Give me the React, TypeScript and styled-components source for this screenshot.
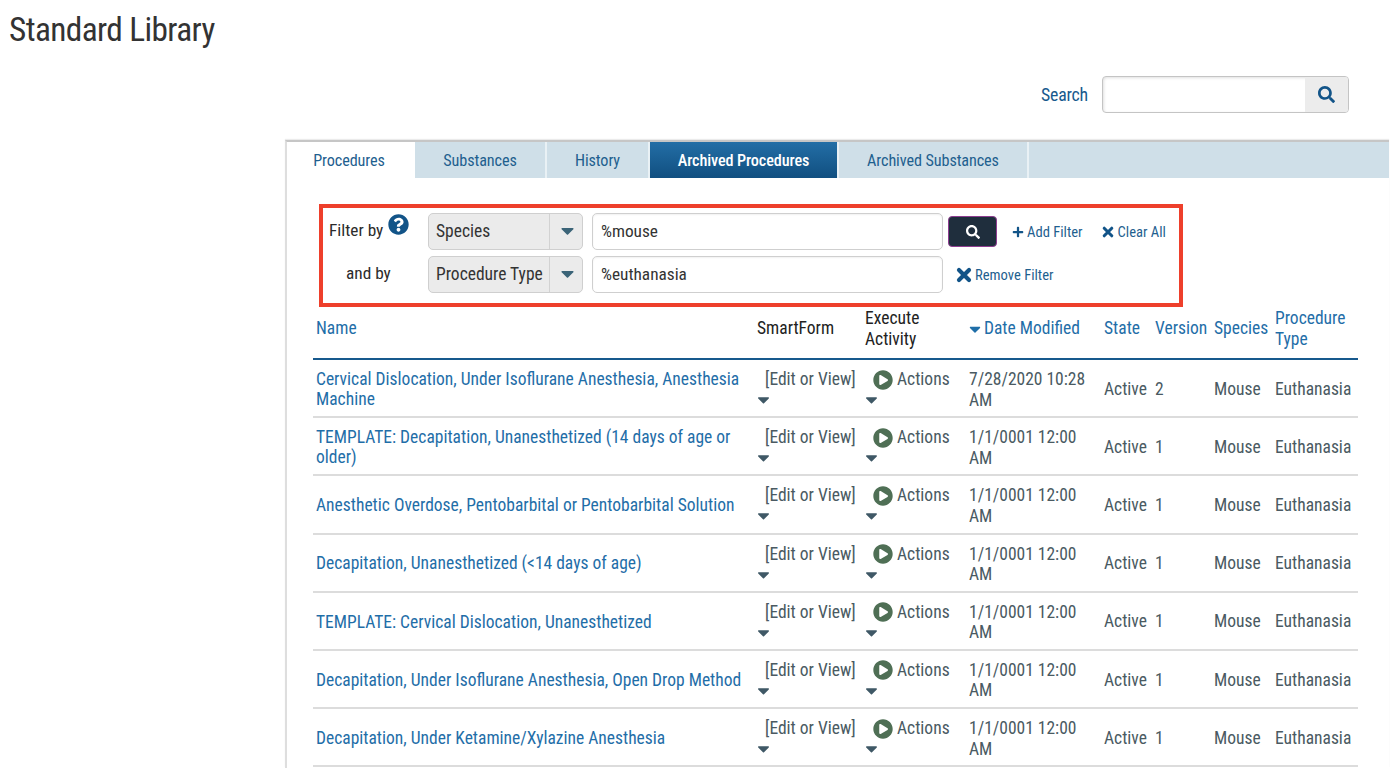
import React from 'react';
import styled, { createGlobalStyle } from 'styled-components';
import { FaSearch, FaPlus, FaQuestionCircle, FaPlayCircle, FaCaretDown } from 'react-icons/fa';

const GlobalStyle = createGlobalStyle`
  html, body {
    margin: 0;
    padding: 0;
    height: 768px;
    overflow: hidden;
    background: #fff;
  }
  body {
    font-family: Roboto, "Liberation Sans", sans-serif;
    font-stretch: 75%;
    color: #3d4a52;
  }
  * { box-sizing: border-box; }
`;

const Page = styled.div`
  width: 1392px;
  height: 768px;
  overflow: hidden;
`;

const Title = styled.h1`
  margin: 0;
  height: 76px;
  padding: 11px 0 0 9px;
  font-size: 33.3px;
  line-height: 38px;
  font-weight: 400;
  color: #333;
  letter-spacing: -0.6px;
`;

const SearchRow = styled.div`
  display: flex;
  align-items: center;
  justify-content: flex-end;
  gap: 14px;
  height: 64px;
  padding: 0 43px 27px 0;
`;

const SearchLabel = styled.span`
  font-size: 17.8px;
  color: #17598d;
  letter-spacing: -0.2px;
`;

const SearchBox = styled.div`
  display: flex;
  width: 247px;
  height: 37px;
  border: 1px solid #c4c4c4;
  border-radius: 4px;
  overflow: hidden;
  box-shadow: inset 1px 1px 3px rgba(0, 0, 0, 0.12);
`;

const SearchField = styled.div`
  flex: 1;
`;

const SearchButton = styled.div`
  width: 43px;
  display: flex;
  align-items: center;
  justify-content: center;
  background: #ececec;
  color: #125488;
  font-size: 17px;
`;

const Panel = styled.section`
  margin-left: 285px;
  width: 1104px;
  height: 628px;
  border-top: 2px solid #c6c6c6;
  border-left: 2px solid #dedede;
  box-shadow: 0 -1px 1px rgba(0, 0, 0, 0.08);
`;

const TabBar = styled.div`
  display: flex;
  height: 36px;
  background: #cfdfe8;
`;

const Tab = styled.div<{ $state?: 'current' | 'dark'; $w: number }>`
  width: ${p => p.$w}px;
  display: flex;
  align-items: center;
  justify-content: center;
  font-size: 16.2px;
  letter-spacing: -0.1px;
  font-weight: ${p => (p.$state === 'dark' ? 500 : 400)};
  border-right: 2px solid #e9f1f5;
  color: ${p => (p.$state === 'dark' ? '#fff' : '#1f5f8f')};
  background: ${p =>
    p.$state === 'current'
      ? '#fff'
      : p.$state === 'dark'
      ? 'linear-gradient(#236ea6, #114f80)'
      : 'transparent'};
  ${p => (p.$state === 'current' ? 'border-right: 0; padding-right: 4px;' : '')}
`;

const FilterBox = styled.div`
  margin: 26px 0 0 32px;
  width: 864px;
  height: 103px;
  border: 4px solid #ee3f2b;
  padding: 5px 0 0 6px;
  display: flex;
  flex-direction: column;
  gap: 6px;
`;

const FilterRow = styled.div`
  display: flex;
  align-items: center;
  height: 37px;
`;

const FilterLabel = styled.div<{ $indent?: boolean }>`
  width: 99px;
  margin-top: -3px;
  font-size: 17.3px;
  color: #2b2b2b;
  display: flex;
  align-items: flex-start;
  gap: 5px;
  padding-left: ${p => (p.$indent ? 17 : 0)}px;
`;

const HelpIcon = styled(FaQuestionCircle)`
  font-size: 21px;
  color: #125488;
  margin-top: -6px;
`;

const SelectBox = styled.div`
  width: 155px;
  height: 37px;
  display: flex;
  border: 1px solid #cfcfcf;
  border-radius: 5px;
  background: #ebebeb;
  font-size: 17.5px;
  color: #333;
`;

const SelectText = styled.div`
  flex: 1;
  display: flex;
  align-items: center;
  padding: 0 0 2px 7px;
  border-right: 1px solid #d2d2d2;
`;

const SelectArrow = styled.div`
  width: 32px;
  padding: 0 0 2px 2px;
  display: flex;
  align-items: center;
  justify-content: center;
  color: #3b6478;
  font-size: 21px;
`;

const TextField = styled.div`
  margin-left: 9px;
  width: 351px;
  height: 37px;
  display: flex;
  align-items: center;
  padding: 0 0 2px 8px;
  border: 1px solid #cfcfcf;
  border-radius: 5px;
  font-size: 17.3px;
  color: #333;
  box-shadow: inset 0 1px 2px rgba(0, 0, 0, 0.06);
`;

const GoButton = styled.div`
  margin-left: 5px;
  width: 49px;
  height: 31px;
  display: flex;
  align-items: center;
  justify-content: center;
  border: 1px solid #8e3d90;
  border-radius: 4px;
  background: #1f2e3d;
  color: #fff;
  font-size: 14px;
`;

const FilterAction = styled.div<{ $gap: number; $left: number }>`
  margin-left: ${p => p.$left}px;
  display: flex;
  align-items: center;
  gap: ${p => p.$gap}px;
  font-size: 14.6px;
  color: #1f5f8f;
  svg { color: #125488; }
`;

const Grid = styled.div`
  margin-left: 26px;
  width: 1045px;
`;

const columns = '444px 108px 104px 135px 51px 59px 61px 83px';

const HeadRow = styled.div`
  display: grid;
  grid-template-columns: ${columns};
  align-items: center;
  height: 53px;
  border-bottom: 2px solid #17598d;
  padding-bottom: 8px;
`;

const HeadCell = styled.div<{ $plain?: boolean; $pad?: number }>`
  font-size: 17.5px;
  line-height: 21px;
  padding-left: ${p => p.$pad ?? 0}px;
  color: ${p => (p.$plain ? '#222' : '#1f6ea8')};
`;

const SortCell = styled(HeadCell)`
  display: flex;
  align-items: center;
  svg { margin-left: -3px; }
`;

const Row = styled.div`
  display: grid;
  grid-template-columns: ${columns};
  height: 58.2px;
  border-bottom: 2px solid #dcdcdc;
  font-size: 17.5px;
  line-height: 21px;
`;

const NameCell = styled.div`
  align-self: center;
  padding-left: 3px;
  margin-top: 2px;
  line-height: 20.5px;
  color: #1f6ea8;
`;

const MenuCell = styled.div`
  padding-top: 9px;
  color: #4a5a62;
`;

const MenuText = styled.div`
  display: flex;
  align-items: center;
  gap: 4px;
  padding-left: 8px;
  white-space: nowrap;
`;

const PlayIcon = styled(FaPlayCircle)`
  font-size: 20px;
  color: #4f6f55;
`;

const MenuCaret = styled(FaCaretDown)`
  display: block;
  margin-left: -3px;
  font-size: 19px;
  color: #3f5866;
`;

const DateCell = styled.div`
  padding: 9px 8px 0 0;
  line-height: 20.5px;
  color: #4a5a62;
`;

const PlainCell = styled.div`
  align-self: center;
  margin-top: 2px;
  color: #4a5a62;
`;

const XIcon: React.FC<{ size: number }> = ({ size }) => (
  <svg width={size} height={size} viewBox="0 0 14 14" fill="none" stroke="currentColor" strokeWidth="3.6" strokeLinecap="round">
    <path d="M2.6 2.6 L11.4 11.4 M11.4 2.6 L2.6 11.4" />
  </svg>
);

const tabs = [
  { label: 'Procedures', w: 128, state: 'current' as const },
  { label: 'Substances', w: 132 },
  { label: 'History', w: 103 },
  { label: 'Archived Procedures', w: 189, state: 'dark' as const },
  { label: 'Archived Substances', w: 190 },
];

const rows = [
  { name: 'Cervical Dislocation, Under Isoflurane Anesthesia, Anesthesia Machine', date: '7/28/2020 10:28 AM', version: '2' },
  { name: 'TEMPLATE: Decapitation, Unanesthetized (14 days of age or older)', date: '1/1/0001 12:00 AM', version: '1' },
  { name: 'Anesthetic Overdose, Pentobarbital or Pentobarbital Solution', date: '1/1/0001 12:00 AM', version: '1' },
  { name: 'Decapitation, Unanesthetized (<14 days of age)', date: '1/1/0001 12:00 AM', version: '1' },
  { name: 'TEMPLATE: Cervical Dislocation, Unanesthetized', date: '1/1/0001 12:00 AM', version: '1' },
  { name: 'Decapitation, Under Isoflurane Anesthesia, Open Drop Method', date: '1/1/0001 12:00 AM', version: '1' },
  { name: 'Decapitation, Under Ketamine/Xylazine Anesthesia', date: '1/1/0001 12:00 AM', version: '1' },
];

const App: React.FC = () => (
  <Page>
    <GlobalStyle />
    <Title>Standard Library</Title>
    <SearchRow>
      <SearchLabel>Search</SearchLabel>
      <SearchBox>
        <SearchField />
        <SearchButton><FaSearch /></SearchButton>
      </SearchBox>
    </SearchRow>
    <Panel>
      <TabBar>
        {tabs.map(t => (
          <Tab key={t.label} $w={t.w} $state={t.state}>{t.label}</Tab>
        ))}
      </TabBar>
      <FilterBox>
        <FilterRow>
          <FilterLabel>Filter by <HelpIcon /></FilterLabel>
          <SelectBox>
            <SelectText>Species</SelectText>
            <SelectArrow><FaCaretDown /></SelectArrow>
          </SelectBox>
          <TextField>%mouse</TextField>
          <GoButton><FaSearch /></GoButton>
          <FilterAction $left={15} $gap={3}><FaPlus size={12} /> Add Filter</FilterAction>
          <FilterAction $left={19} $gap={4}><XIcon size={12} /> Clear All</FilterAction>
        </FilterRow>
        <FilterRow>
          <FilterLabel $indent>and by</FilterLabel>
          <SelectBox>
            <SelectText>Procedure Type</SelectText>
            <SelectArrow><FaCaretDown /></SelectArrow>
          </SelectBox>
          <TextField>%euthanasia</TextField>
          <FilterAction $left={13} $gap={3}><XIcon size={16} /> Remove Filter</FilterAction>
        </FilterRow>
      </FilterBox>
      <Grid>
        <HeadRow>
          <HeadCell $pad={3}>Name</HeadCell>
          <HeadCell $plain>SmartForm</HeadCell>
          <HeadCell $plain>Execute<br />Activity</HeadCell>
          <SortCell><FaCaretDown size={18} />Date Modified</SortCell>
          <HeadCell>State</HeadCell>
          <HeadCell>Version</HeadCell>
          <HeadCell>Species</HeadCell>
          <HeadCell>Procedure<br />Type</HeadCell>
        </HeadRow>
        {rows.map(r => (
          <Row key={r.name}>
            <NameCell>{r.name}</NameCell>
            <MenuCell>
              <MenuText>[Edit or View]</MenuText>
              <MenuCaret />
            </MenuCell>
            <MenuCell>
              <MenuText><PlayIcon /> Actions</MenuText>
              <MenuCaret />
            </MenuCell>
            <DateCell>{r.date}</DateCell>
            <PlainCell>Active</PlainCell>
            <PlainCell>{r.version}</PlainCell>
            <PlainCell>Mouse</PlainCell>
            <PlainCell>Euthanasia</PlainCell>
          </Row>
        ))}
      </Grid>
    </Panel>
  </Page>
);

export default App;
